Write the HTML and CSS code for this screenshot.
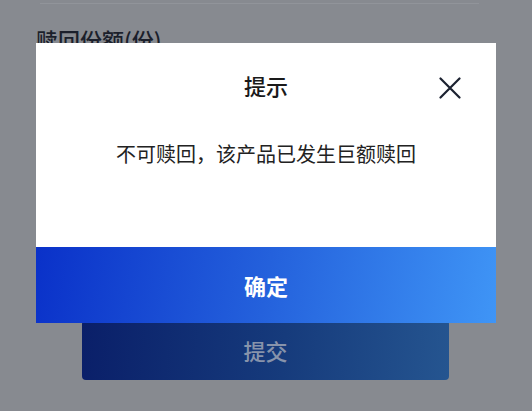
FILE: index.html
```html
<!DOCTYPE html>
<html lang="zh-CN">
<head>
<meta charset="utf-8">
<title>提示</title>
<link rel="stylesheet" href="styles.css">
</head>
<body>
<div class="page">
  <div class="divider"></div>
  <div class="label">赎回份额(份)</div>
  <button class="submit" type="button">提交</button>
</div>
<div class="dialog" role="dialog">
  <div class="dialog-head">
    <span class="dialog-title">提示</span>
    <svg class="close" width="22" height="22" viewBox="0 0 22 22" aria-hidden="true">
      <path d="M1.5 1.5 L20.5 20.5 M20.5 1.5 L1.5 20.5" stroke="#1b2130" stroke-width="2.2" stroke-linecap="round" fill="none"/>
    </svg>
  </div>
  <div class="dialog-body">不可赎回，该产品已发生巨额赎回</div>
  <button class="confirm" type="button">确定</button>
</div>
</body>
</html>
```
FILE: styles.css
```css
* { box-sizing: border-box; }
html, body {
  margin: 0;
  padding: 0;
  width: 532px;
  height: 411px;
  overflow: hidden;
  background: #878a90;
  font-family: "Noto Sans CJK SC", "Noto Sans", sans-serif;
}
.page {
  display: flex;
  flex-direction: column;
  align-items: stretch;
  padding: 3px 0 0;
  height: 411px;
}
.divider {
  height: 1px;
  margin: 0 53px 0 40px;
  background: #91949a;
}
.label {
  margin: 20px 0 0 36px;
  font-size: 22px;
  line-height: 30px;
  color: #1b1f2b;
  font-weight: 500;
}
.submit {
  margin: 266px 83px 0 82px;
  height: 60px;
  border: none;
  border-radius: 4px;
  background: linear-gradient(95deg, #0a1f69 0%, #163b7c 55%, #255590 100%);
  color: #8793ab;
  font-family: inherit;
  font-size: 22px;
  font-weight: 500;
  padding: 0;
}
.dialog {
  position: absolute;
  left: 36px;
  top: 43px;
  width: 460px;
  background: #fff;
  display: flex;
  flex-direction: column;
}
.dialog-head {
  position: relative;
  height: 88px;
  padding-bottom: 4px;
  display: flex;
  align-items: center;
  justify-content: center;
}
.dialog-title {
  font-size: 22px;
  color: #1a1a1a;
  font-weight: 500;
}
.close {
  position: absolute;
  right: 35px;
  top: 34px;
}
.dialog-body {
  height: 116px;
  padding-top: 8px;
  text-align: center;
  font-size: 20px;
  line-height: 30px;
  color: #222;
}
.confirm {
  height: 76px;
  border: none;
  padding: 0;
  background: linear-gradient(100deg, #0a31c9 0%, #2461dc 50%, #3f95f6 100%);
  color: #fff;
  font-family: inherit;
  font-size: 22px;
  font-weight: 700;
}
```
